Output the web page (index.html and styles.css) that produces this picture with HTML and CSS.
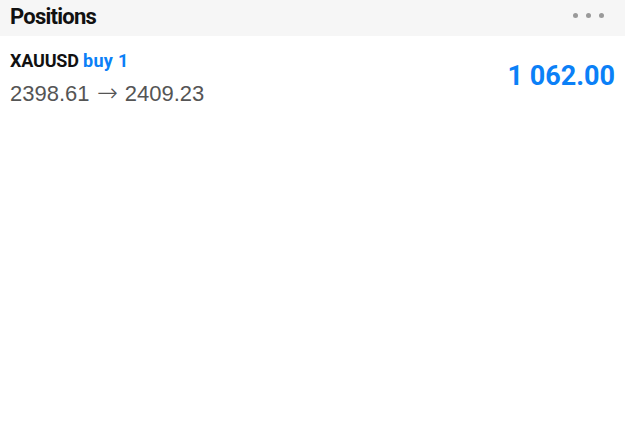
FILE: index.html
```html
<!DOCTYPE html>
<html>
<head>
<meta charset="utf-8">
<link rel="stylesheet" href="styles.css">
</head>
<body>
<div class="app">
  <header class="bar">
    <h1 class="title">Positions</h1>
    <div class="more"><span class="dot"></span><span class="dot"></span><span class="dot"></span></div>
  </header>
  <div class="row">
    <div class="info">
      <div class="symbol">XAUUSD <span class="side">buy 1</span></div>
      <div class="prices">2398.61 <span class="arrow">→</span> 2409.23</div>
    </div>
    <div class="profit">1 062.00</div>
  </div>
</div>
</body>
</html>
```
FILE: styles.css
```css
html, body { margin: 0; padding: 0; background: #fff; }
.app { width: 625px; height: 426px; background: #fff; }
.bar {
  height: 36px;
  background: #f6f6f6;
  display: flex;
  align-items: center;
  justify-content: space-between;
  padding: 0 21px 3px 10px;
  box-sizing: border-box;
}
.title {
  margin: 0;
  font-family: Roboto, "Noto Sans", sans-serif;
  font-weight: bold;
  font-size: 22px;
  line-height: 26px;
  color: #111;
  letter-spacing: -0.75px;
}
.more { display: flex; gap: 8px; margin-bottom: 2px; }
.dot { width: 5px; height: 5px; border-radius: 50%; background: #9a9a9a; }
.row {
  display: flex;
  justify-content: space-between;
  align-items: center;
  padding: 14px 10px 0 10px;
}
.symbol {
  font-family: Roboto, "Noto Sans", sans-serif;
  font-weight: bold;
  font-size: 18px;
  line-height: 22px;
  color: #111;
  letter-spacing: -0.2px;
}
.side { color: #0b80f7; letter-spacing: 0.3px; }
.prices {
  font-family: "Liberation Sans", Arial, sans-serif;
  font-size: 22px;
  line-height: 26px;
  color: #555;
  margin-top: 9px;
  white-space: nowrap;
}
.arrow {
  font-family: "DejaVu Sans", sans-serif;
  font-size: 25px;
  line-height: 20px;
  font-weight: 300;
  margin: 0 1px;
}
.profit {
  font-family: Roboto, "Noto Sans", sans-serif;
  font-weight: bold;
  font-size: 27px;
  line-height: 32px;
  color: #0b80f7;
  padding-bottom: 6px;
}
```
